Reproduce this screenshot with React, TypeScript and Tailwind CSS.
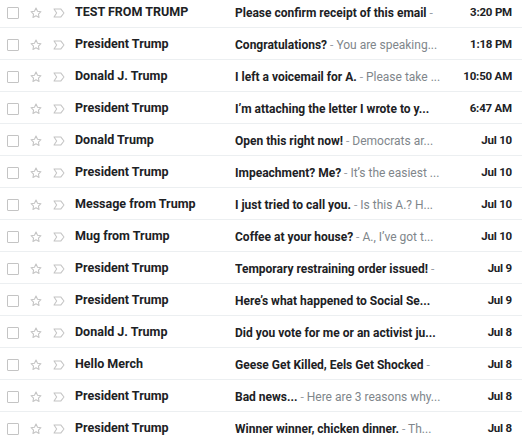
const emails = [
  { from: "TEST FROM TRUMP", subject: "Please confirm receipt of this email", snippet: "", date: "3:20 PM" },
  { from: "President Trump", subject: "Congratulations?", snippet: "You are speaking...", date: "1:18 PM" },
  { from: "Donald J. Trump", subject: "I left a voicemail for A.", snippet: "Please take ...", date: "10:50 AM" },
  { from: "President Trump", subject: "I\u2019m attaching the letter I wrote to y...", snippet: null, date: "6:47 AM" },
  { from: "Donald Trump", subject: "Open this right now!", snippet: "Democrats ar...", date: "Jul 10" },
  { from: "President Trump", subject: "Impeachment? Me?", snippet: "It\u2019s the easiest ...", date: "Jul 10" },
  { from: "Message from Trump", subject: "I just tried to call you.", snippet: "Is this A.? H...", date: "Jul 10" },
  { from: "Mug from Trump", subject: "Coffee at your house?", snippet: "A., I\u2019ve got t...", date: "Jul 10" },
  { from: "President Trump", subject: "Temporary restraining order issued!", snippet: "", date: "Jul 9" },
  { from: "President Trump", subject: "Here\u2019s what happened to Social Se...", snippet: null, date: "Jul 9" },
  { from: "Donald J. Trump", subject: "Did you vote for me or an activist ju...", snippet: null, date: "Jul 8" },
  { from: "Hello Merch", subject: "Geese Get Killed, Eels Get Shocked", snippet: "", date: "Jul 8" },
  { from: "President Trump", subject: "Bad news...", snippet: "Here are 3 reasons why...", date: "Jul 8" },
  { from: "President Trump", subject: "Winner winner, chicken dinner.", snippet: "Th...", date: "Jul 8" },
]

function Star() {
  return (
    <svg viewBox="0 0 24 24" className="h-[14px] w-[14px]" fill="none" stroke="#c4c4c4" strokeWidth="1.8" strokeLinejoin="round">
      <path d="M12 3.5l2.6 5.4 5.9.8-4.3 4.1 1 5.8L12 16.8l-5.2 2.8 1-5.8-4.3-4.1 5.9-.8z" />
    </svg>
  )
}

function Important() {
  return (
    <svg viewBox="0 0 24 24" className="h-[14px] w-[14px]" fill="none" stroke="#c4c4c4" strokeWidth="1.8" strokeLinejoin="round">
      <path d="M3.5 5h11.5l5.5 7-5.5 7H3.5l4.5-7z" />
    </svg>
  )
}

export default function App() {
  return (
    <div className="h-[442px] w-[522px] overflow-hidden bg-white" style={{ fontFamily: "Roboto, 'Liberation Sans', sans-serif" }}>
      <div className="-mt-[4px]">
        {emails.map((e, i) => (
          <div key={i} className="flex h-[32px] items-center border-b border-[#eceff1] pt-[2px] text-[#202124]">
            <div className="ml-[7px] h-[12px] w-[12px] shrink-0 rounded-[1px] border-[1.5px] border-[#c4c4c4]" />
            <div className="ml-[10px] flex w-[14px] shrink-0 justify-center">
              <Star />
            </div>
            <div className="ml-[9px] flex w-[14px] shrink-0 justify-center">
              <Important />
            </div>
            <div className="ml-[9px] w-[160px] shrink-0 truncate text-[12.5px] font-bold">{e.from}</div>
            <div className="w-[226px] shrink-0 overflow-hidden whitespace-nowrap text-[12px]">
              <span className="font-bold">{e.subject}</span>
              {e.snippet !== null && <span className="text-[#9aa0a6]"> - </span>}
              {e.snippet && <span className="text-[#80868b]">{e.snippet}</span>}
            </div>
            <div className="min-w-0 flex-1 whitespace-nowrap pr-[10px] text-right text-[11.5px] font-bold tracking-[-0.2px]">{e.date}</div>
          </div>
        ))}
      </div>
    </div>
  )
}
